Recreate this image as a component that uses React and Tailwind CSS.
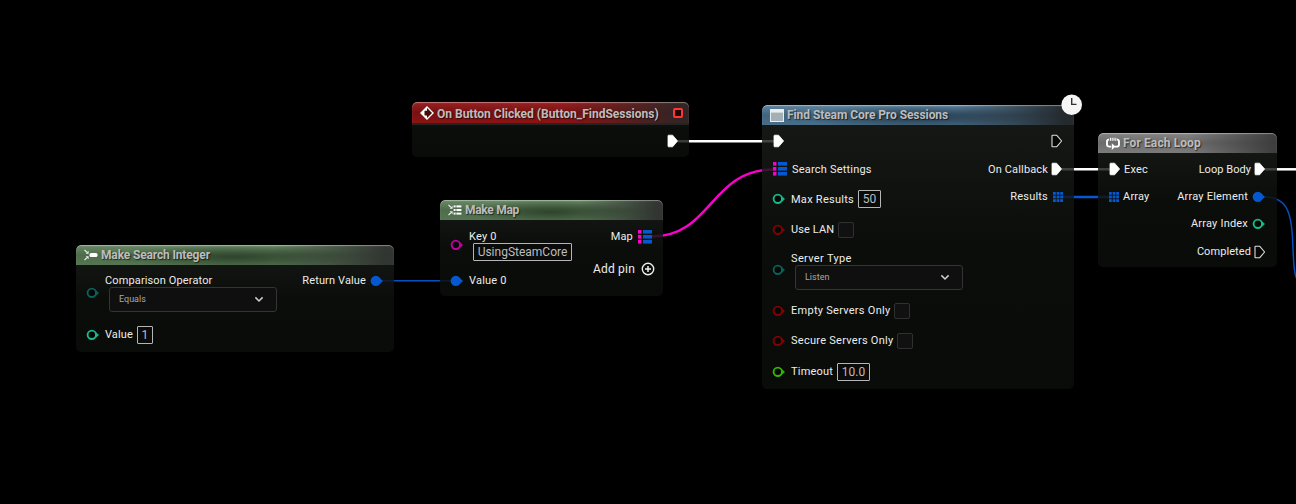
import React from 'react';

const Ring = ({ color, filled }) => (
  <svg width="14" height="12" viewBox="0 0 14 12" className="block shrink-0">
    <path d="M9.4 2.8 L13 6 L9.4 9.2 Z" fill={color} />
    <circle cx="5.8" cy="5.8" r={4.2} fill={filled ? color : '#050706'} stroke={color} strokeWidth="1.9" />
  </svg>
);

const Exec = ({ open }) => (
  <svg width="12" height="14" viewBox="0 0 12 14" className="block shrink-0">
    <path
      d="M1 1.8 Q1 1.2 1.6 1.2 H5.6 L10.6 7 L5.6 12.8 H1.6 Q1 12.8 1 12.2 Z"
      fill={open ? '#060706' : '#fff'}
      stroke={open ? '#ddd' : '#fff'}
      strokeWidth={open ? 1.1 : 0.8}
      strokeLinejoin="round"
    />
  </svg>
);

const ArrayPin = () => (
  <svg width="10" height="10" viewBox="0 0 10 10" className="block shrink-0">
    {[0, 3.6, 7.2].map((y) => [0, 3.6, 7.2].map((x) => (
      <rect key={x + '-' + y} x={x} y={y} width="2.8" height="2.8" fill="#0558d0" />
    )))}
  </svg>
);

const MapPin = () => (
  <svg width="14" height="14" viewBox="0 0 14 14" className="block shrink-0">
    {[0, 5, 10].map((y) => (
      <g key={y}>
        <rect x="0" y={y} width="3.4" height="3.6" fill="#fb00c8" />
        <rect x="5" y={y} width="9" height="3.6" fill="#0558d0" />
      </g>
    ))}
  </svg>
);

const Chevron = () => (
  <svg width="10" height="7" viewBox="0 0 10 7" className="block shrink-0">
    <path d="M1.4 1.4 L5 5 L8.6 1.4" fill="none" stroke="#cfcfcf" strokeWidth="1.5" />
  </svg>
);

const Label = ({ children, className = '' }) => (
  <span className={'whitespace-nowrap text-[11px] leading-[14px] text-[#ececec] ' + (className || 'tracking-[0.2px]')}>{children}</span>
);

const Value = ({ children, className = '' }) => (
  <span className={'flex h-[18px] items-center justify-center rounded-[1px] border border-[#b5b5b5] bg-[#0a0b0a] text-[12px] leading-none text-[#bdbdbd] ' + className}>
    {children}
  </span>
);

const Check = () => <span className="block size-4 rounded-[2px] border border-[#2f302f] bg-[#101110]" />;

const Dropdown = ({ children, className = '' }) => (
  <div className={'flex h-[25px] items-center justify-between rounded-[3px] border border-[#333433] bg-[#0f0f0f] pl-[9px] pr-3 text-[9px] text-[#a8a8a8] ' + className}>
    <span>{children}</span>
    <Chevron />
  </div>
);

const Node = ({ className, header, icon, title, titleClass = '', extra, children }) => (
  <section className={'absolute flex flex-col overflow-hidden rounded-[5px] bg-linear-to-b from-[rgba(28,31,28,0.82)] via-[rgba(13,16,13,0.82)] via-50% to-[rgba(11,14,11,0.82)] ' + className}>
    <header className={'flex shrink-0 items-center rounded-t-[5px] shadow-[inset_0_1px_1px_rgba(255,255,255,0.4)] ' + header}>
      {icon}
      <h2 className={'whitespace-nowrap text-[12px] font-bold leading-[14px] text-[#bdbdbd] [text-shadow:1px_1px_1px_rgba(0,0,0,0.6)] ' + titleClass}>{title}</h2>
      {extra}
    </header>
    <div className="flex grow justify-between">{children}</div>
  </section>
);

const Arrows = () => (
  <g stroke="#eee" strokeWidth="1.1" fill="#eee">
    <path d="M0.5 1 L3.4 3.7 M0.5 11 L3.4 8.3" fill="none" />
    <path d="M4.6 1.8 V4.8 H1.6 Z M4.6 10.2 V7.2 H1.6 Z" stroke="none" />
  </g>
);

const green = 'bg-[linear-gradient(90deg,rgba(48,50,48,0)_62%,rgba(48,50,48,0.95)_97%),radial-gradient(ellipse_38%_60%_at_50%_60%,rgba(38,58,36,0.8)_0%,rgba(38,58,36,0)_100%),linear-gradient(180deg,#6a8a66_0%,#4e6c4b_50%,#557652_100%)]';

export default function App() {
  return (
    <main className="relative h-[504px] w-[1296px] overflow-hidden bg-black font-['Roboto','Liberation_Sans',sans-serif]">
      <svg width="1296" height="504" className="absolute inset-0" fill="none">
        <path d="M678 141.3 H774" stroke="#fff" strokeWidth="2.5" />
        <path d="M380 280.8 H452" stroke="#0550bd" strokeWidth="1.5" />
        <path d="M652 236.5 C712 236.5 710 169.5 774 169.5" stroke="#fb00cc" strokeWidth="2.5" />
        <path d="M1062 169.3 H1110" stroke="#fff" strokeWidth="2.5" />
        <path d="M1062 196.9 H1110" stroke="#0558d0" strokeWidth="2.5" />
        <path d="M1264 169.3 H1296" stroke="#fff" strokeWidth="2.5" />
        <path d="M1262 196.7 C1286 196.7 1291 210 1292.5 238 C1293.5 262 1294 274 1297 279" stroke="#0550bd" strokeWidth="1.5" />
      </svg>

      <Node
        className="left-[76px] top-[245px] h-[107px] w-[318px]"
        header={'h-5 pl-2 ' + green}
        title="Make Search Integer"
        titleClass="tracking-[-0.15px]"
        icon={<svg width="14" height="12" viewBox="0 0 14 12" className="mr-[3px]"><Arrows /><rect x="5.5" y="4" width="8" height="4" rx="1.6" fill="#fff" /></svg>}
      >
        <div className="pl-[10px] pt-[9px]">
          <div className="flex h-[40px]">
            <div className="mr-[5px] pt-[13px]"><Ring color="#0b6059" /></div>
            <div className="flex flex-col">
              <Label className="h-[13px] tracking-[0.13px]">Comparison Operator</Label>
              <Dropdown className="ml-1 w-[168px]">Equals</Dropdown>
            </div>
          </div>
          <div className="mt-[11px] flex h-[19px] items-center">
            <Ring color="#1ab98a" />
            <Label className="ml-[5px] mr-1 tracking-[0.1px]">Value</Label>
            <Value className="w-4">1</Value>
          </div>
        </div>
        <div className="flex h-8 items-center gap-1 pr-[10px]"><Label className="tracking-[0.13px]">Return Value</Label><Ring color="#0558d0" filled /></div>
      </Node>

      <Node
        className="left-[412px] top-[102px] h-[55px] w-[277px]"
        header="h-[23px] border-b-2 border-[#222523] pl-2 pt-px bg-[linear-gradient(90deg,rgba(44,38,38,0)_55%,rgba(44,38,38,0.95)_98%),linear-gradient(180deg,#9a2222,#761112_50%,#8c1313)]"
        title="On Button Clicked (Button_FindSessions)"
        titleClass="pt-px"
        icon={
          <svg width="14" height="14" viewBox="0 0 14 14" className="mr-[3px]">
            <path d="M7 1 L13 7 L7 13 L1 7 Z" fill="#4a0808" stroke="#fff" strokeWidth="1.4" />
            <path d="M7 1 L1 7 L7 13 V9.4 H4.5 V4.8 H7 Z" fill="#fff" />
          </svg>
        }
        extra={<span className="ml-auto mr-[6px] size-[10px] rounded-[2px] border-2 border-[#ff3535] bg-[#210606]" />}
      >
        <div />
        <div className="flex h-8 items-center pr-[10px]"><Exec /></div>
      </Node>

      <Node
        className="left-[440px] top-[200px] h-[96px] w-[223px]"
        header={'h-5 pl-2 ' + green}
        title="Make Map"
        titleClass="tracking-[-0.3px]"
        icon={
          <svg width="14" height="12" viewBox="0 0 14 12" className="mr-[3px]">
            <Arrows />
            {[1.4, 5, 8.6].map((y) => <g key={y} fill="#fff"><rect x="5.6" y={y} width="2" height="2" /><rect x="8.4" y={y} width="5" height="2" /></g>)}
          </svg>
        }
      >
        <div className="pl-[10px] pt-[10px]">
          <div className="flex h-[32px]">
            <div className="mr-[5px] pt-[9px]"><Ring color="#c400a4" /></div>
            <div className="flex flex-col">
              <Label className="h-[13px] tracking-[0.2px]">Key 0</Label>
              <Value className="ml-1 w-[99px]">UsingSteamCore</Value>
            </div>
          </div>
          <div className="mt-[12px] flex h-[14px] items-center gap-[5px]"><Ring color="#0558d0" filled /><Label>Value 0</Label></div>
        </div>
        <div className="flex flex-col items-end">
          <div className="flex h-[34px] items-center gap-[5px] pr-[11px]"><Label>Map</Label><MapPin /></div>
          <div className="flex h-[30px] items-center gap-[6px] pr-2">
            <span className="text-[12px] leading-4 tracking-[0.2px] text-[#ececec]">Add pin</span>
            <svg width="14" height="14" viewBox="0 0 14 14"><circle cx="7" cy="7" r="5.7" stroke="#eee" strokeWidth="1.4" fill="none" /><path d="M7 4 V10 M4 7 H10" stroke="#eee" strokeWidth="1.5" /></svg>
          </div>
        </div>
      </Node>

      <Node
        className="left-[762px] top-[105px] h-[284px] w-[312px]"
        header="h-5 pl-2 bg-[linear-gradient(90deg,rgba(34,38,41,0)_62%,rgba(34,38,41,0.95)_97%),radial-gradient(ellipse_38%_60%_at_50%_60%,rgba(31,50,64,0.8)_0%,rgba(31,50,64,0)_100%),linear-gradient(180deg,#5f85a0_0%,#41647f_50%,#496e89_100%)]"
        title="Find Steam Core Pro Sessions"
        titleClass="tracking-[-0.07px]"
        icon={<svg width="14" height="13" viewBox="0 0 14 13" className="mr-[3px]"><rect width="14" height="13" fill="#e9edf0" /><rect x="1" y="3.6" width="12" height="8.4" fill="#a4aeb5" /></svg>}
      >
        <div className="flex flex-col pl-[10px]">
          <div className="flex h-8 items-center pl-px"><Exec /></div>
          <div className="flex h-6 items-center gap-[5px] pl-px"><MapPin /><Label className="pt-px tracking-[0.2px]">Search Settings</Label></div>
          <div className="mt-[3px] flex h-[30px] items-center"><Ring color="#1ab98a" /><Label className="ml-[5px] mr-1 pt-px tracking-[0.27px]">Max Results</Label><Value className="w-[23px]">50</Value></div>
          <div className="flex h-[31px] items-center"><Ring color="#850000" /><Label className="ml-[5px] mr-1 tracking-[0.1px]">Use LAN</Label><Check /></div>
          <div className="mt-[7px] flex h-[39px]">
            <div className="mr-[5px] pt-[12px]"><Ring color="#0b6059" /></div>
            <div className="flex flex-col">
              <Label className="h-[13px] tracking-[0.35px]">Server Type</Label>
              <Dropdown className="ml-1 w-[168px]">Listen</Dropdown>
            </div>
          </div>
          <div className="mt-[5px] flex h-[30px] items-center"><Ring color="#850000" /><Label className="ml-[5px] mr-1 tracking-[0.27px]">Empty Servers Only</Label><Check /></div>
          <div className="flex h-[30px] items-center"><Ring color="#850000" /><Label className="ml-[5px] mr-1 tracking-[0.27px]">Secure Servers Only</Label><Check /></div>
          <div className="flex h-[31px] items-center"><Ring color="#35b400" /><Label className="ml-[5px] mr-1 tracking-[0.2px]">Timeout</Label><Value className="w-[33px]">10.0</Value></div>
        </div>
        <div className="flex flex-col items-end pr-[11px]">
          <div className="flex h-8 items-center"><Exec open /></div>
          <div className="flex h-6 items-center gap-[3px]"><Label className="pt-px tracking-[0.15px]">On Callback</Label><Exec /></div>
          <div className="flex h-[31px] items-center gap-[5px]"><Label>Results</Label><ArrayPin /></div>
        </div>
      </Node>
      <svg width="22" height="22" viewBox="0 0 22 22" className="absolute left-[1061px] top-[94px]">
        <circle cx="10.7" cy="10.7" r="10.3" fill="#f6f6f6" />
        <path d="M10.7 4 V10.4 H15.5" fill="none" stroke="#333" strokeWidth="1.4" />
      </svg>

      <Node
        className="left-[1098px] top-[133px] h-[134px] w-[179px]"
        header="h-5 pl-2 bg-[linear-gradient(90deg,rgba(56,56,56,0)_50%,rgba(56,56,56,0.9)_98%),linear-gradient(180deg,#858585_0%,#6c6c6c_50%,#7c7c7c_100%)]"
        title="For Each Loop"
        titleClass="tracking-[0.1px]"
        icon={
          <svg width="14" height="13" viewBox="0 0 14 13" className="mr-[3px]" fill="none" stroke="#fff">
            <path d="M5.2 9.6 H3.4 Q1 9.6 1 7.4 V4.6 Q1 2.8 3 2.4 M11 2.4 Q13 2.8 13 4.6 V7.4 Q13 9.6 10.6 9.6 H8.4" strokeWidth="1.9" />
            <path d="M4.4 0.8 V3.8 M6.2 0.8 V3.8 M8 0.8 V3.8 M9.8 0.8 V3.8" strokeWidth="1" />
            <path d="M5.8 6.2 L9.4 9.6 L5.8 13 Z" fill="#fff" stroke="none" />
          </svg>
        }
      >
        <div className="flex flex-col pl-[10px]">
          <div className="flex h-8 items-center gap-[3px] pl-px"><Exec /><Label className="pt-px tracking-[0.2px]">Exec</Label></div>
          <div className="flex h-[23px] items-center gap-1 pl-px"><ArrayPin /><Label>Array</Label></div>
        </div>
        <div className="flex flex-col items-end pr-[11px]">
          <div className="flex h-8 items-center gap-[3px]"><Label className="pt-px tracking-[0.05px]">Loop Body</Label><Exec /></div>
          <div className="flex h-[23px] items-center gap-[4px]"><Label>Array Element</Label><Ring color="#0558d0" filled /></div>
          <div className="flex h-8 items-center gap-[4px]"><Label>Array Index</Label><Ring color="#1ab98a" /></div>
          <div className="flex h-[23px] items-center gap-[3px]"><Label className="tracking-[0.08px]">Completed</Label><Exec open /></div>
        </div>
      </Node>
    </main>
  );
}
